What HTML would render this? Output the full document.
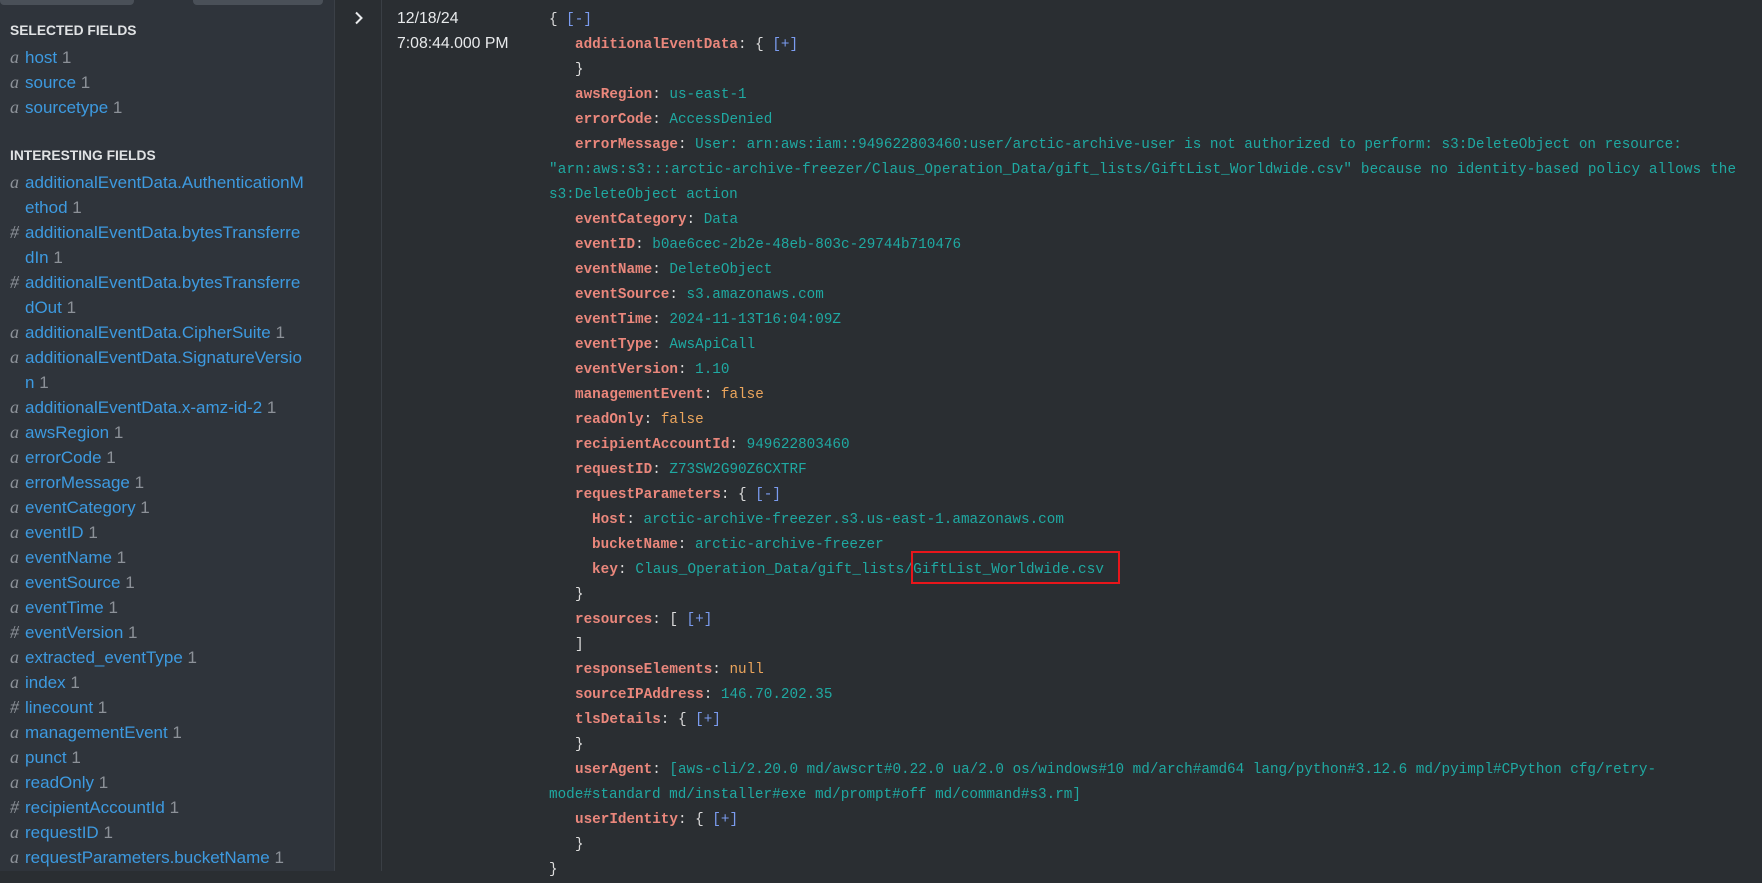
<!DOCTYPE html>
<html><head><meta charset="utf-8"><style>
*{margin:0;padding:0;box-sizing:border-box}
body{width:1762px;height:871px;overflow:hidden;background:#2a2e32;position:relative;font-family:"Liberation Sans",sans-serif}
#side{position:absolute;left:0;top:0;width:335px;height:871px;background:#2f343b;border-right:1px solid #3b4047}
.tab{position:absolute;top:0;height:5px;background:#4a5058;border-radius:0 0 4px 4px}
.r{position:absolute;left:10px;height:25px;line-height:25px;font-size:17px;white-space:nowrap;color:#3d9ae0}
.r i{font-family:"Liberation Serif",serif;color:#8c9198;font-size:18px;display:inline-block;width:15px}
.r b{font-weight:normal;color:#8c9198}
.h{position:absolute;left:10px;font-size:13.8px;font-weight:bold;color:#e0e2e4;height:25px;line-height:25px}
#div2{position:absolute;left:381px;top:0;width:1px;height:871px;background:#3a3f45}
.ts{position:absolute;left:397px;color:#e8eaec;font-size:15.8px;height:25px;line-height:25px}
.j{position:absolute;height:25px;line-height:25px;font-family:"Liberation Mono",monospace;font-size:14.3px;white-space:pre;color:#dcdcdc}
.k{color:#ea877c;font-weight:bold}
.v{color:#1fa9a2}
.o{color:#eba55c}
.p{color:#7b9cf0}
#box{position:absolute;left:911px;top:551px;width:209px;height:33px;border:2px solid #e8161b}
</style></head><body>
<div id="side">
<div class="tab" style="left:0;width:134px"></div>
<div class="tab" style="left:193px;width:130px"></div>
<div class="h" style="top:18px">SELECTED FIELDS</div>
<div class="r" style="top:45px"><i>a</i>host <b>1</b></div>
<div class="r" style="top:70px"><i>a</i>source <b>1</b></div>
<div class="r" style="top:95px"><i>a</i>sourcetype <b>1</b></div>
<div class="h" style="top:143px">INTERESTING FIELDS</div>
<div class="r" style="top:170px"><i>a</i>additionalEventData.AuthenticationM</div>
<div class="r" style="top:195px"><i></i>ethod <b>1</b></div>
<div class="r" style="top:220px"><i>#</i>additionalEventData.bytesTransferre</div>
<div class="r" style="top:245px"><i></i>dIn <b>1</b></div>
<div class="r" style="top:270px"><i>#</i>additionalEventData.bytesTransferre</div>
<div class="r" style="top:295px"><i></i>dOut <b>1</b></div>
<div class="r" style="top:320px"><i>a</i>additionalEventData.CipherSuite <b>1</b></div>
<div class="r" style="top:345px"><i>a</i>additionalEventData.SignatureVersio</div>
<div class="r" style="top:370px"><i></i>n <b>1</b></div>
<div class="r" style="top:395px"><i>a</i>additionalEventData.x-amz-id-2 <b>1</b></div>
<div class="r" style="top:420px"><i>a</i>awsRegion <b>1</b></div>
<div class="r" style="top:445px"><i>a</i>errorCode <b>1</b></div>
<div class="r" style="top:470px"><i>a</i>errorMessage <b>1</b></div>
<div class="r" style="top:495px"><i>a</i>eventCategory <b>1</b></div>
<div class="r" style="top:520px"><i>a</i>eventID <b>1</b></div>
<div class="r" style="top:545px"><i>a</i>eventName <b>1</b></div>
<div class="r" style="top:570px"><i>a</i>eventSource <b>1</b></div>
<div class="r" style="top:595px"><i>a</i>eventTime <b>1</b></div>
<div class="r" style="top:620px"><i>#</i>eventVersion <b>1</b></div>
<div class="r" style="top:645px"><i>a</i>extracted_eventType <b>1</b></div>
<div class="r" style="top:670px"><i>a</i>index <b>1</b></div>
<div class="r" style="top:695px"><i>#</i>linecount <b>1</b></div>
<div class="r" style="top:720px"><i>a</i>managementEvent <b>1</b></div>
<div class="r" style="top:745px"><i>a</i>punct <b>1</b></div>
<div class="r" style="top:770px"><i>a</i>readOnly <b>1</b></div>
<div class="r" style="top:795px"><i>#</i>recipientAccountId <b>1</b></div>
<div class="r" style="top:820px"><i>a</i>requestID <b>1</b></div>
<div class="r" style="top:845px"><i>a</i>requestParameters.bucketName <b>1</b></div>
</div>
<div id="div2"></div>
<svg style="position:absolute;left:353px;top:11px" width="12" height="14" viewBox="0 0 12 14"><path d="M3 1.5 L8.5 7 L3 12.5" fill="none" stroke="#e8eaec" stroke-width="2"/></svg>
<div class="ts" style="top:6px">12/18/24</div>
<div class="ts" style="top:31px">7:08:44.000 PM</div>

<div class="j" style="left:549px;top:8px">{ <span class="p">[-]</span></div>
<div class="j" style="left:575px;top:33px"><span class="k">additionalEventData</span>: { <span class="p">[+]</span></div>
<div class="j" style="left:575px;top:58px">}</div>
<div class="j" style="left:575px;top:83px"><span class="k">awsRegion</span>: <span class="v">us-east-1</span></div>
<div class="j" style="left:575px;top:108px"><span class="k">errorCode</span>: <span class="v">AccessDenied</span></div>
<div class="j" style="left:575px;top:133px"><span class="k">errorMessage</span>: <span class="v">User: arn:aws:iam::949622803460:user/arctic-archive-user is not authorized to perform: s3:DeleteObject on resource:</span></div>
<div class="j v" style="left:549px;top:158px;letter-spacing:0.15px">"arn:aws:s3:::arctic-archive-freezer/Claus_Operation_Data/gift_lists/GiftList_Worldwide.csv" because no identity-based policy allows the</div>
<div class="j v" style="left:549px;top:183px">s3:DeleteObject action</div>
<div class="j" style="left:575px;top:208px"><span class="k">eventCategory</span>: <span class="v">Data</span></div>
<div class="j" style="left:575px;top:233px"><span class="k">eventID</span>: <span class="v">b0ae6cec-2b2e-48eb-803c-29744b710476</span></div>
<div class="j" style="left:575px;top:258px"><span class="k">eventName</span>: <span class="v">DeleteObject</span></div>
<div class="j" style="left:575px;top:283px"><span class="k">eventSource</span>: <span class="v">s3.amazonaws.com</span></div>
<div class="j" style="left:575px;top:308px"><span class="k">eventTime</span>: <span class="v">2024-11-13T16:04:09Z</span></div>
<div class="j" style="left:575px;top:333px"><span class="k">eventType</span>: <span class="v">AwsApiCall</span></div>
<div class="j" style="left:575px;top:358px"><span class="k">eventVersion</span>: <span class="v">1.10</span></div>
<div class="j" style="left:575px;top:383px"><span class="k">managementEvent</span>: <span class="o">false</span></div>
<div class="j" style="left:575px;top:408px"><span class="k">readOnly</span>: <span class="o">false</span></div>
<div class="j" style="left:575px;top:433px"><span class="k">recipientAccountId</span>: <span class="v">949622803460</span></div>
<div class="j" style="left:575px;top:458px"><span class="k">requestID</span>: <span class="v">Z73SW2G90Z6CXTRF</span></div>
<div class="j" style="left:575px;top:483px"><span class="k">requestParameters</span>: { <span class="p">[-]</span></div>
<div class="j" style="left:592px;top:508px"><span class="k">Host</span>: <span class="v">arctic-archive-freezer.s3.us-east-1.amazonaws.com</span></div>
<div class="j" style="left:592px;top:533px"><span class="k">bucketName</span>: <span class="v">arctic-archive-freezer</span></div>
<div class="j" style="left:592px;top:558px;letter-spacing:0.1px"><span class="k">key</span>: <span class="v">Claus_Operation_Data/gift_lists/GiftList_Worldwide.csv</span></div>
<div class="j" style="left:575px;top:583px">}</div>
<div class="j" style="left:575px;top:608px"><span class="k">resources</span>: [ <span class="p">[+]</span></div>
<div class="j" style="left:575px;top:633px">]</div>
<div class="j" style="left:575px;top:658px"><span class="k">responseElements</span>: <span class="o">null</span></div>
<div class="j" style="left:575px;top:683px"><span class="k">sourceIPAddress</span>: <span class="v">146.70.202.35</span></div>
<div class="j" style="left:575px;top:708px"><span class="k">tlsDetails</span>: { <span class="p">[+]</span></div>
<div class="j" style="left:575px;top:733px">}</div>
<div class="j" style="left:575px;top:758px"><span class="k">userAgent</span>: <span class="v">[aws-cli/2.20.0 md/awscrt#0.22.0 ua/2.0 os/windows#10 md/arch#amd64 lang/python#3.12.6 md/pyimpl#CPython cfg/retry-</span></div>
<div class="j v" style="left:549px;top:783px">mode#standard md/installer#exe md/prompt#off md/command#s3.rm]</div>
<div class="j" style="left:575px;top:808px"><span class="k">userIdentity</span>: { <span class="p">[+]</span></div>
<div class="j" style="left:575px;top:833px">}</div>
<div class="j" style="left:549px;top:858px">}</div>
<div id="box"></div>
</body></html>
